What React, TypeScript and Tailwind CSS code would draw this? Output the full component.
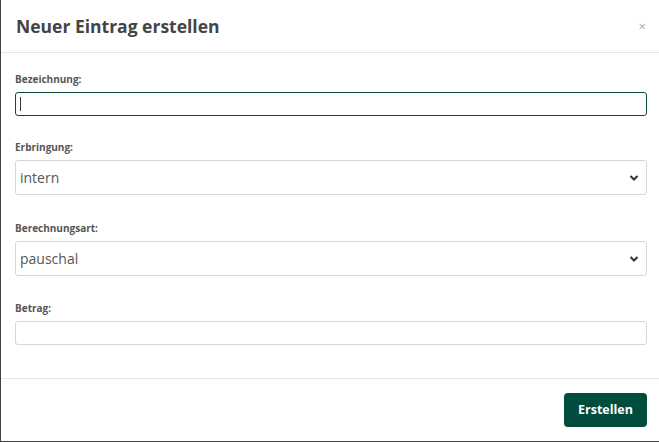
import React from 'react';

const Chevron: React.FC = () => (
  <svg width="10" height="8" viewBox="0 0 10 8" className="absolute right-[7px] top-1/2 -translate-y-1/2">
    <path d="M1.5 2 L5 5.5 L8.5 2" fill="none" stroke="#333" strokeWidth="2" />
  </svg>
);

const Label: React.FC<{ text: string }> = ({ text }) => (
  <div className="text-[10px] leading-[14px] font-bold text-[#555] mb-[6px]">{text}</div>
);

const SelectBox: React.FC<{ value: string }> = ({ value }) => (
  <div className="relative h-[35px] border border-[#d6d6d6] rounded-[3px] flex items-center px-[4px] text-[14px] text-[#555]">
    {value}
    <Chevron />
  </div>
);

const App: React.FC = () => {
  return (
    <div className="w-[659px] h-[442px] bg-[#444] pl-px pb-px" style={{ fontFamily: '"Open Sans", sans-serif' }}>
      <div className="w-full h-full bg-white flex flex-col">
        {/* Header */}
        <div className="h-[53px] border-b border-[#e5e5e5] flex items-center justify-between pl-[15px] pr-[13px] shrink-0">
          <h1 className="text-[17.5px] font-bold text-[#444] pt-px">Neuer Eintrag erstellen</h1>
          <span className="text-[13px] text-[#aaa] leading-none">×</span>
        </div>

        {/* Body */}
        <div className="flex-1 pl-[14px] pr-[12px] pt-[19px]">
          <Label text="Bezeichnung:" />
          <div className="h-[24px] border border-[#0b4a3a] rounded-[3px] flex items-center pl-[4px] mb-[24px]">
            <span className="w-px h-[14px] bg-[#333]" />
          </div>

          <Label text="Erbringung:" />
          <div className="mb-[26px]">
            <SelectBox value="intern" />
          </div>

          <Label text="Berechnungsart:" />
          <div className="mb-[25px]">
            <SelectBox value="pauschal" />
          </div>

          <Label text="Betrag:" />
          <div className="h-[24px] border border-[#d6d6d6] rounded-[3px]" />
        </div>

        {/* Footer */}
        <div className="h-[63px] border-t border-[#e5e5e5] flex items-center justify-end pr-[12px] shrink-0">
          <button className="h-[34px] w-[83px] bg-[#004c3d] text-white text-[12.5px] font-bold rounded-[4px]">
            Erstellen
          </button>
        </div>
      </div>
    </div>
  );
};

export default App;
